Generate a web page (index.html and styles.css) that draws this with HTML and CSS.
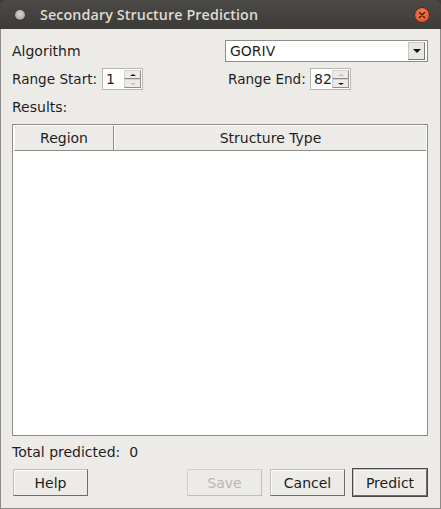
FILE: index.html
```html
<!DOCTYPE html>
<html>
<head>
<meta charset="utf-8">
<link rel="stylesheet" href="styles.css">
</head>
<body>
<div class="window">
  <div class="titlebar">
    <span class="menu-dot"></span>
    <span class="title">Secondary Structure Prediction</span>
    <span class="close">
      <svg width="10" height="10" viewBox="0 0 10 10"><path d="M2.5 2.5 L7.5 7.5 M7.5 2.5 L2.5 7.5" stroke="#3a1a10" stroke-width="1.4" stroke-linecap="round"/></svg>
    </span>
  </div>
  <div class="content">
    <div class="form">
      <div class="cell label">Algorithm</div>
      <div class="cell">
        <div class="combo">
          <span class="combo-text">GORIV</span>
          <span class="combo-btn"><span class="tri-down"></span></span>
        </div>
      </div>
      <div class="cell">
        <span class="label range-start">Range Start:</span>
        <div class="spin">
          <span class="spin-text">1</span>
          <span class="spin-btns">
            <span class="sbtn"><span class="tri-up"></span></span>
            <span class="sbtn"><span class="tri-down small dis"></span></span>
          </span>
        </div>
      </div>
      <div class="cell end">
        <span class="label range-end">Range End:</span>
        <div class="spin">
          <span class="spin-text">82</span>
          <span class="spin-btns">
            <span class="sbtn"><span class="tri-up dis"></span></span>
            <span class="sbtn"><span class="tri-down small"></span></span>
          </span>
        </div>
      </div>
    </div>
    <div class="results-label">Results:</div>
    <div class="table">
      <div class="thead">
        <div class="th th-region">Region</div>
        <div class="th th-type">Structure Type</div>
      </div>
      <div class="tbody"></div>
    </div>
    <div class="total">Total predicted:&nbsp; 0</div>
    <div class="buttons">
      <button class="btn help">Help</button>
      <span class="spacer"></span>
      <button class="btn disabled">Save</button>
      <button class="btn cancel">Cancel</button>
      <span class="default-frame"><button class="btn predict">Predict</button></span>
    </div>
  </div>
</div>
</body>
</html>
```
FILE: styles.css
```css
* { box-sizing: border-box; }
html, body { margin: 0; padding: 0; }
body {
  width: 441px;
  height: 509px;
  background: #3c3b37;
  font-family: "DejaVu Sans", sans-serif;
  font-size: 14px;
  color: #1e1e1e;
  overflow: hidden;
}
.window {
  width: 441px;
  height: 509px;
  display: flex;
  flex-direction: column;
}
.titlebar {
  height: 29px;
  flex: none;
  display: flex;
  align-items: center;
  background: linear-gradient(#4b4a46, #3c3b37);
  border-radius: 6px 6px 0 0;
  position: relative;
}
.menu-dot {
  width: 10px;
  height: 10px;
  margin-left: 15px;
  border-radius: 50%;
  background: radial-gradient(circle at 50% 40%, #d8d6d2 0, #b6b4b0 55%, #6b6964 100%);
  box-shadow: 0 1px 0 #2a2926;
}
.title {
  margin-left: 15px;
  color: #dfdbd2;
  font-family: "Open Sans", sans-serif;
  font-size: 14.3px;
  font-weight: 600;
  letter-spacing: 0.1px;
}
.close {
  position: absolute;
  right: 11px;
  top: 7px;
  width: 16px;
  height: 16px;
  border-radius: 50%;
  background: radial-gradient(circle at 50% 35%, #f47a4e, #df4a1e);
  box-shadow: 0 0 0 1px #3a2a20 inset;
  display: flex;
  align-items: center;
  justify-content: center;
}
.content {
  flex: 1;
  background: #edebe8;
  border: 1px solid #8c8a86;
  border-top: none;
  padding: 11px 12px 0 11px;
  display: flex;
  flex-direction: column;
}
.form {
  display: grid;
  grid-template-columns: 213px 203px;
  grid-template-rows: 22px 22px;
  row-gap: 6px;
}
.cell {
  display: flex;
  align-items: center;
}
.cell.end { padding-left: 3px; }
.combo {
  width: 203px;
  height: 22px;
  background: #fff;
  border: 1px solid #8e8c88;
  display: flex;
  align-items: center;
  padding: 1px;
}
.combo-text {
  flex: 1;
  padding-left: 3px;
}
.combo-btn {
  width: 17px;
  height: 18px;
  margin-right: 1px;
  border: 1px solid;
  border-color: #c9c6c1 #7a7874 #7a7874 #c9c6c1;
  background: #e9e7e3;
  display: flex;
  align-items: center;
  justify-content: center;
}
.tri-down {
  width: 0; height: 0;
  border-left: 4px solid transparent;
  border-right: 4px solid transparent;
  border-top: 4px solid #111;
}
.tri-down.small {
  border-left-width: 3px;
  border-right-width: 3px;
  border-top-width: 2px;
}
.tri-up {
  width: 0; height: 0;
  border-left: 3px solid transparent;
  border-right: 3px solid transparent;
  border-bottom: 2px solid #111;
}
.tri-down.dis { border-top-color: #c2bfba; }
.tri-up.dis { border-bottom-color: #c2bfba; }
.label { white-space: nowrap; }
.range-start { width: 90px; font-size: 13.6px; }
.range-end { width: 82px; font-size: 13.6px; }
.spin {
  width: 41px;
  height: 22px;
  background: #fff;
  border: 1px solid #b9b6b1;
  display: flex;
  padding: 1px 1px 1px 0;
}
.spin-text {
  flex: 1;
  padding-left: 3px;
  line-height: 18px;
  font-size: 14px;
}
.spin-btns {
  width: 17px;
  display: flex;
  flex-direction: column;
}
.sbtn {
  flex: 1;
  border: 1px solid;
  border-color: #d4d1cc #8f8d89 #8f8d89 #d4d1cc;
  background: #ecebe7;
  display: flex;
  align-items: center;
  justify-content: center;
}
.results-label {
  margin-top: 8px;
  height: 18px;
  line-height: 18px;
}
.table {
  margin-top: 8px;
  width: 416px;
  height: 312px;
  flex: none;
  border: 1px solid #8e8c88;
  background: #fff;
  display: flex;
  flex-direction: column;
}
.thead {
  height: 26px;
  display: flex;
  background: #edebe8;
  border: 1px solid #fff;
  border-bottom: none;
}
.th {
  display: flex;
  align-items: center;
  justify-content: center;
  border-right: 1px solid #8e8c88;
  border-bottom: 1px solid #8e8c88;
  border-left: 1px solid #fbfaf9;
}
.th-region { width: 100px; }
.th-type { flex: 1; border-right: none; }
.tbody { flex: 1; }
.total {
  margin-top: 7px;
  height: 18px;
  line-height: 18px;
}
.buttons {
  margin-top: 7px;
  display: flex;
  align-items: center;
  height: 29px;
}
.spacer { flex: 1; }
.btn {
  font-family: "DejaVu Sans", sans-serif;
  font-size: 14px;
  color: #1e1e1e;
  width: 75px;
  height: 27px;
  padding: 0;
  background: #edebe8;
  border: 1px solid;
  border-color: #c3c0bb #6f6d69 #6f6d69 #c3c0bb;
  box-shadow: inset 1px 1px 0 #fbfaf8;
}
.help { margin-left: 1px; }
.disabled {
  color: #b9b6b1;
  border-color: #d3d0cb #c1beb9 #c1beb9 #d3d0cb;
  box-shadow: none;
  margin-right: 8px;
}
.cancel { margin-right: 7px; }
.default-frame {
  border: 1px solid #4c4a47;
  display: flex;
}
.predict {
  width: 74px;
}
```
